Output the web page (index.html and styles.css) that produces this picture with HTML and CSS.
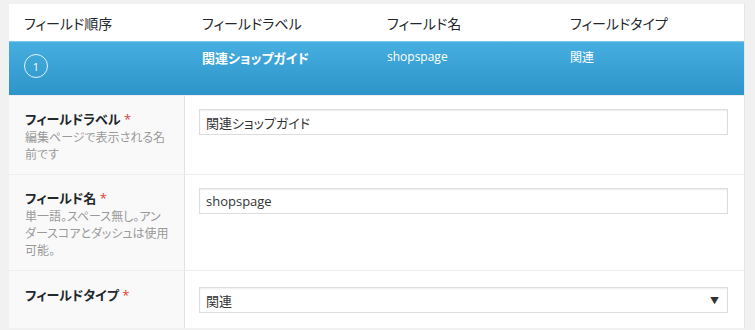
FILE: index.html
```html
<!DOCTYPE html>
<html lang="ja">
<head>
  <meta charset="UTF-8">
  <title>フィールド編集</title>
  <link rel="stylesheet" href="styles.css">
</head>
<body>
  <div class="fields">
    <div class="fields-head">
      <div class="col">フィールド順序</div>
      <div class="col">フィールドラベル</div>
      <div class="col">フィールド名</div>
      <div class="col">フィールドタイプ</div>
    </div>

    <div class="field-handle">
      <div class="col"><span class="order">1</span></div>
      <div class="col"><strong>関連ショップガイド</strong></div>
      <div class="col">shopspage</div>
      <div class="col">関連</div>
    </div>

    <div class="field-row">
      <div class="field-label">
        <label>フィールドラベル <span class="required">*</span></label>
        <p class="desc">編集ページで表示される名前です</p>
      </div>
      <div class="field-input">
        <input type="text" value="関連ショップガイド">
      </div>
    </div>

    <div class="field-row">
      <div class="field-label">
        <label>フィールド名 <span class="required">*</span></label>
        <p class="desc">単一語。スペース無し。アンダースコアとダッシュは使用可能。</p>
      </div>
      <div class="field-input">
        <input type="text" value="shopspage">
      </div>
    </div>

    <div class="field-row last">
      <div class="field-label">
        <label>フィールドタイプ <span class="required">*</span></label>
      </div>
      <div class="field-input">
        <div class="select">
          <span>関連</span>
          <span class="arrow">▼</span>
        </div>
      </div>
    </div>
  </div>
</body>
</html>
```

FILE: styles.css
```css
body {
  margin: 0;
  padding: 4px 10px 0 9px;
  background-color: #f1f1f1;
  font-family: 'Open Sans', 'Noto Sans CJK JP', sans-serif;
  font-feature-settings: "palt";
  color: #32373c;
  overflow: hidden;
}
.fields {
  background-color: #fff;
  border-right: 1px solid #e5e5e5;
}
.fields-head,
.field-handle {
  display: grid;
  grid-template-columns: 178px 185px 183px 1fr;
}
.fields-head {
  height: 37px;
  align-items: center;
  font-size: 14px;
  color: #23282d;
}
.fields-head .col {
  padding-left: 15px;
}
.field-handle {
  height: 54px;
  box-sizing: border-box;
  background: linear-gradient(#47aee0, #2d94c9);
  border-top: 1px solid #7cc7ec;
  color: #fff;
  font-size: 12px;
}
.field-handle .col {
  padding: 6px 0 0 15px;
}
.field-handle strong {
  font-size: 13px;
}
.field-handle .col:first-child {
  padding-top: 12px;
}
.order {
  display: inline-flex;
  align-items: center;
  justify-content: center;
  width: 22px;
  height: 22px;
  border: 1px solid #e4f3fb;
  border-radius: 50%;
  font-size: 11px;
}
.field-row {
  display: flex;
  border-top: 1px solid #eee;
}
.field-row:first-of-type {
  border-top: none;
}
.field-label {
  width: 176px;
  flex: none;
  box-sizing: border-box;
  padding: 13px 14px 11px 16px;
  background-color: #f9f9f9;
  border-right: 1px solid #e1e1e1;
}
.field-label label {
  display: block;
  font-size: 13px;
  font-weight: bold;
  line-height: 20px;
  color: #23282d;
}
.required {
  color: #dd3d36;
  font-weight: normal;
}
.desc {
  margin: 0;
  font-size: 12px;
  line-height: 17px;
  color: #999;
}
.field-input {
  flex: 1;
  padding: 13px 16px 0 14px;
}
.field-input input,
.select {
  display: flex;
  align-items: center;
  width: 100%;
  height: 26px;
  box-sizing: border-box;
  margin: 0;
  padding: 0 6px;
  border: 1px solid #ddd;
  box-shadow: inset 0 1px 2px rgba(0, 0, 0, 0.07);
  font-family: inherit;
  font-feature-settings: "palt";
  font-size: 13px;
  color: #333;
  background-color: #fff;
}
.last .field-label {
  padding-top: 14px;
  padding-bottom: 23px;
}
.last .field-input {
  padding-top: 16px;
}
.select {
  justify-content: space-between;
  padding-right: 8px;
}
.arrow {
  font-size: 9px;
  color: #333;
}
```
